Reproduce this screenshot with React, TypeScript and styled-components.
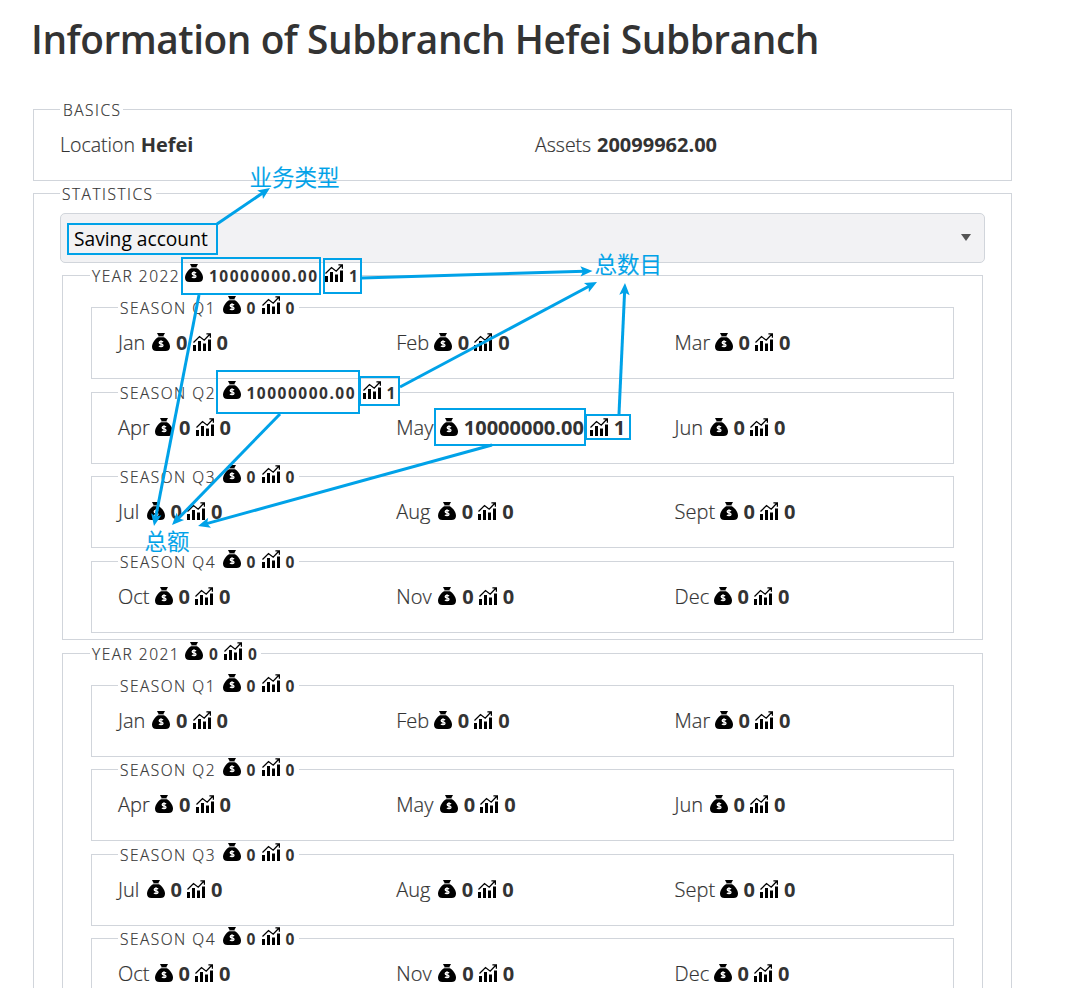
import React from 'react';
import styled, { createGlobalStyle } from 'styled-components';

const Global = createGlobalStyle`
  *, *::before, *::after { box-sizing: border-box; }
  body { margin: 0; background: #fff; color: #333; overflow: hidden; }
`;

const Page = styled.main`
  position: relative;
  width: 1068px;
  height: 988px;
  overflow: hidden;
  padding: 12px 56px 0 33px;
  display: flex;
  flex-direction: column;
  font-family: 'Open Sans', 'Noto Sans', sans-serif;
  font-size: 19.5px;
  font-weight: 300;
  -webkit-text-stroke: 0.2px currentColor;

  b { font-weight: 700; -webkit-text-stroke: 0; }
`;

const Title = styled.h1`
  flex: none;
  margin: 0 0 43px -2px;
  height: 54px;
  font-size: 38.8px;
  line-height: 54px;
  font-weight: 600;
  letter-spacing: -0.45px;
  white-space: nowrap;
  -webkit-text-stroke: 0;
`;

const Panel = styled.section`
  flex: none;
  display: flex;
  flex-direction: column;
  border: 1px solid #d1d5db;
`;

const Legend = styled.div`
  flex: none;
  align-self: flex-start;
  display: flex;
  align-items: center;
  height: 20px;
  margin-top: -10px;
  padding: 0 3px 0 2px;
  background: #fff;
  font-size: 15.5px;
  line-height: 20px;
  letter-spacing: 1.5px;
  text-transform: uppercase;
  white-space: nowrap;
`;

const LegendLabel = styled.span<{ $width?: number }>`
  width: ${p => (p.$width ? `${p.$width}px` : 'auto')};
`;

const Basics = styled(Panel)`
  width: 979px;
  height: 72px;
  margin-bottom: 12px;
  ${Legend} { margin-left: 26px; padding: 0 2px 0 3px; }
`;

const BasicsRow = styled.div`
  display: grid;
  grid-template-columns: 475px 1fr;
  padding: 12px 0 0 26px;
  line-height: 26px;

  b { font-size: 20px; margin-left: 0.7px; }
`;

const Statistics = styled(Panel)`
  width: 979px;
  height: 900px;
  padding: 0 26px;
  > ${Legend} { margin-left: 0; padding-right: 2px; }
`;

const SelectBox = styled.div`
  flex: none;
  display: flex;
  align-items: center;
  justify-content: space-between;
  height: 50px;
  margin: 9px 0 12px;
  padding: 1px 13px 0 13px;
  border: 1px solid #d1d5db;
  border-radius: 5px;
  background: #f2f2f4;
  color: #000;
  font-size: 19.2px;
  font-weight: 400;
  -webkit-text-stroke: 0;

  svg { margin-bottom: 3px; }
`;

const Year = styled(Panel)`
  width: 921px;
  height: 365px;
  margin: 0 0 12.9px 2px;
  padding: 0 28px;
  > ${Legend} { margin-left: -1px; }
`;

const Seasons = styled.div`
  display: flex;
  flex-direction: column;
  gap: 12.5px;
  padding-top: 21px;
`;

const Season = styled(Panel)`
  width: 863px;
  height: 72px;
  > ${Legend} { margin-left: 26px; }
`;

const Months = styled.div`
  display: grid;
  grid-template-columns: repeat(3, 278.3px);
  padding: 12px 0 0 26px;
`;

const Month = styled.div`
  display: flex;
  align-items: center;
  height: 26px;
  line-height: 26px;
  font-size: 20px;
  white-space: nowrap;
`;

const MonthName = styled.span<{ $width: number }>`
  width: ${p => p.$width}px;
`;

const Amount = styled.b<{ $width: number }>`
  width: ${p => p.$width}px;
  padding-left: 6px;
`;

const Icon = styled.svg`
  flex: none;
  width: 18px;
  height: 18px;
  margin-bottom: 2px;
`;

const LegendIcon = styled(Icon)`
  margin-bottom: 6px;
`;

const Overlay = styled.svg`
  position: absolute;
  inset: 0;
`;

const Note = styled.span<{ $x: number; $y: number }>`
  position: absolute;
  left: ${p => p.$x}px;
  top: ${p => p.$y}px;
  color: #00a2e8;
  font: 350 22.5px/30px 'Noto Sans CJK SC', sans-serif;
  white-space: nowrap;
`;

const bag = (
  <>
    <path d="M5 0h8l-1.600 3H6.600z" />
    <path d="M6.300 3h5.400v1.200H6.300z" fill="#999" />
    <path d="M6 4.200h6C15.200 6.200 18 10.200 18 13.700 18 16.500 16.400 18 13.600 18H4.400C1.600 18 0 16.500 0 13.700 0 10.200 2.800 6.200 6 4.200z" />
    <path
      d="M11 9.100C10.500 8.300 7.200 8 7.200 9.700c0 1.700 3.800.8 3.800 2.600 0 1.800-3.300 1.600-4 .5M9 7.300v7"
      fill="none"
      stroke="#fff"
      strokeWidth="1.300"
    />
  </>
);

const chart = (
  <>
    <path d="M0 12h3v6H0zM5 8h3v10H5zM10 10.500h3V18h-3zM15 6.500h3V18h-3z" />
    <path d="M.5 9.500 6.500 3.600l4.700 3.600L17 1M13.400.8h4v4" fill="none" stroke="#000" strokeWidth="1.300" />
  </>
);

type Totals = { amount?: string; count?: string };

const LegendTotals = ({ amount = '0', count = '0' }: Totals) => (
  <>
    <LegendIcon viewBox="0 0 18 18">{bag}</LegendIcon>
    <Amount $width={amount === '0' ? 21 : 122}>{amount}</Amount>
    <LegendIcon viewBox="0 0 18 18">{chart}</LegendIcon>
    <Amount $width={16}>{count}</Amount>
  </>
);

const MonthTotals = ({ amount = '0', count = '0' }: Totals) => (
  <>
    <Icon viewBox="0 0 18 18">{bag}</Icon>
    <Amount $width={amount === '0' ? 22.5 : 132}>{amount}</Amount>
    <Icon viewBox="0 0 18 18">{chart}</Icon>
    <Amount $width={18}>{count}</Amount>
  </>
);

const quarters: [string, number][][] = [
  [['Jan', 34], ['Feb', 37.5], ['Mar', 40]],
  [['Apr', 37], ['May', 43.5], ['Jun', 35]],
  [['Jul', 28.5], ['Aug', 41.5], ['Sept', 45]],
  [['Oct', 36.5], ['Nov', 42], ['Dec', 39]],
];

const busy: Totals = { amount: '10000000.00', count: '1' };

const YearPanel = ({ year, active }: { year: number; active?: string }) => (
  <Year>
    <Legend>
      <LegendLabel $width={93}>Year {year}</LegendLabel>
      <LegendTotals {...(active ? busy : {})} />
    </Legend>
    <Seasons>
      {quarters.map((months, q) => (
        <Season key={q}>
          <Legend>
            <LegendLabel $width={102.5}>Season Q{q + 1}</LegendLabel>
            <LegendTotals {...(months.some(m => m[0] === active) ? busy : {})} />
          </Legend>
          <Months>
            {months.map(([name, width]) => (
              <Month key={name}>
                <MonthName $width={width}>{name}</MonthName>
                <MonthTotals {...(name === active ? busy : {})} />
              </Month>
            ))}
          </Months>
        </Season>
      ))}
    </Seasons>
  </Year>
);

const boxes = [
  [67, 223, 218, 255],
  [181, 257, 321, 295],
  [323, 258, 362, 294],
  [216, 370, 360, 414],
  [359, 376, 400, 406],
  [434, 408, 586, 446],
  [585, 414, 631, 440],
];

const arrows = [
  [217, 224, 270, 188],
  [362, 278, 592.5, 271],
  [400, 387, 597, 282],
  [619, 414, 625, 283],
  [199, 295, 154, 526],
  [280, 414, 172, 525],
  [492, 445, 198, 526],
];

const Arrow = ({ points: [x1, y1, x2, y2] }: { points: number[] }) => {
  const length = Math.hypot(x2 - x1, y2 - y1);
  const angle = (Math.atan2(y2 - y1, x2 - x1) * 180) / Math.PI;
  return (
    <g transform={`translate(${x1} ${y1}) rotate(${angle})`} fill="#00a2e8">
      <path d={`M0-1.500H${length - 8}V1.500H0z`} />
      <path d={`M${length} 0l-12 5.200 2.500-5.200-2.500-5.200z`} />
    </g>
  );
};

export default function App() {
  return (
    <Page>
      <Global />
      <Title>Information of Subbranch Hefei Subbranch</Title>
      <Basics>
        <Legend>Basics</Legend>
        <BasicsRow>
          <span>Location <b>Hefei</b></span>
          <span>Assets <b>20099962.00</b></span>
        </BasicsRow>
      </Basics>
      <Statistics>
        <Legend>Statistics</Legend>
        <SelectBox>
          Saving account
          <svg width="10" height="7" viewBox="0 0 10 7"><path d="M0 0h10L5 7z" fill="#555" /></svg>
        </SelectBox>
        <YearPanel year={2022} active="May" />
        <YearPanel year={2021} />
      </Statistics>
      <Overlay width="1068" height="988" viewBox="0 0 1068 988">
        {boxes.map(([l, t, r, b]) => (
          <rect key={`${l}-${t}`} x={l + 1} y={t + 1} width={r - l - 2} height={b - t - 2} fill="none" stroke="#00a2e8" strokeWidth="2" />
        ))}
        {arrows.map((points, i) => <Arrow key={i} points={points} />)}
      </Overlay>
      <Note $x={249.5} $y={161}>业务类型</Note>
      <Note $x={594.5} $y={248}>总数目</Note>
      <Note $x={144.5} $y={525}>总额</Note>
    </Page>
  );
}
